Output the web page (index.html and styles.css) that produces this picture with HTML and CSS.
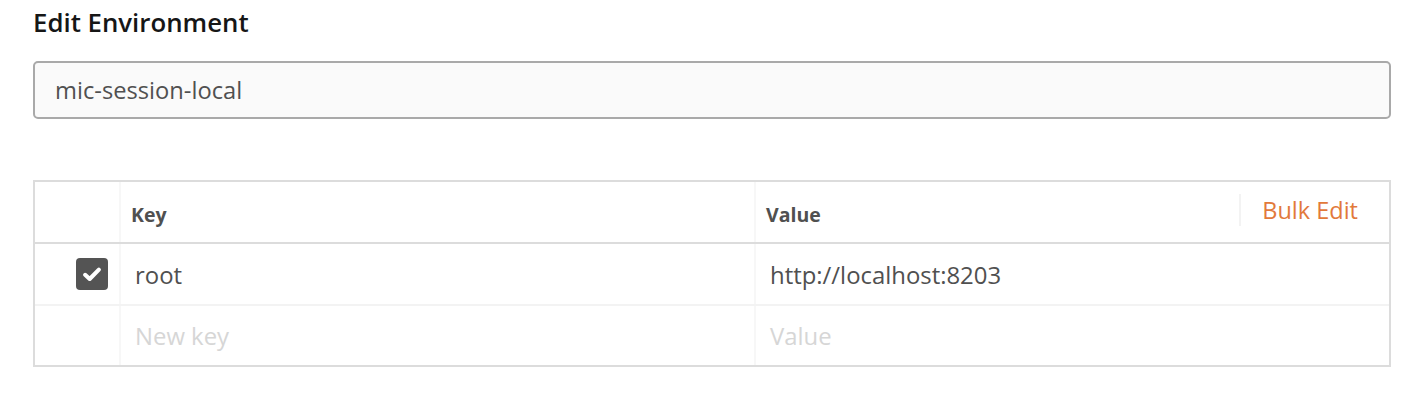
FILE: index.html
```html
<!DOCTYPE html>
<html>
<head>
<meta charset="utf-8">
<link rel="stylesheet" href="styles.css">
</head>
<body>
<div class="page">
  <h1 class="title">Edit Environment</h1>
  <div class="name-input">mic-session-local</div>
  <div class="table">
    <div class="row head">
      <div class="cell check"></div>
      <div class="cell key">Key</div>
      <div class="cell value">
        <span>Value</span>
        <span class="bulk">Bulk Edit</span>
      </div>
    </div>
    <div class="row">
      <div class="cell check">
        <span class="box">
          <svg viewBox="0 0 16 16" width="22" height="22"><path d="M3 8.6 L6.3 11.6 L13 4.8" fill="none" stroke="#fff" stroke-width="3" stroke-linecap="round" stroke-linejoin="round"/></svg>
        </span>
      </div>
      <div class="cell key">root</div>
      <div class="cell value">http://localhost:8203</div>
    </div>
    <div class="row last">
      <div class="cell check"></div>
      <div class="cell key placeholder">New key</div>
      <div class="cell value placeholder">Value</div>
    </div>
  </div>
</div>
</body>
</html>
```

FILE: styles.css
```css
html, body {
  margin: 0;
  padding: 0;
  background: #fff;
}
.page {
  padding: 5px 23px 0 33px;
  font-family: "Open Sans", "Liberation Sans", sans-serif;
  color: #505050;
}
.title {
  margin: 0;
  font-size: 25.8px;
  font-weight: 600;
  color: #161616;
  line-height: 34px;
}
.name-input {
  margin-top: 22px;
  height: 54px;
  border: 2px solid #a9a9a9;
  border-radius: 5px;
  background: #fafafa;
  box-sizing: content-box;
  padding: 0 20px;
  display: flex;
  align-items: center;
  font-size: 23.7px;
  color: #505050;
}
.table {
  margin-top: 61px;
  border: 2px solid #dcdcdc;
}
.row {
  display: grid;
  grid-template-columns: 86px 635px 1fr;
  height: 60px;
  border-bottom: 2px solid #f3f3f3;
}
.row.head {
  height: 60px;
  border-bottom: 2px solid #dcdcdc;
}
.row.last {
  border-bottom: none;
  height: 59px;
}
.cell {
  display: flex;
  align-items: center;
  font-size: 23.9px;
  color: #505050;
}
.cell.check {
  justify-content: flex-end;
  padding-right: 11px;
  border-right: 2px solid #f7f7f7;
}
.cell.key {
  padding-left: 14px;
  border-right: 2px solid #f7f7f7;
}
.cell.value {
  padding-left: 14px;
}
.head .cell {
  font-size: 19.5px;
  font-weight: 700;
  color: #505050;
  padding-top: 4px;
}
.head .cell.key { padding-left: 10px; }
.head .cell.value {
  padding-left: 10px;
  justify-content: space-between;
}
.bulk {
  font-size: 23.5px;
  font-weight: 400;
  color: #e2793b;
  border-left: 2px solid #f3f3f3;
  padding: 0 31px 0 21px;
  margin-top: -8px;
}
.box {
  width: 32px;
  height: 32px;
  border-radius: 4px;
  background: #545454;
  display: flex;
  align-items: center;
  justify-content: center;
}
.placeholder {
  color: #d6d6d6;
}
```
